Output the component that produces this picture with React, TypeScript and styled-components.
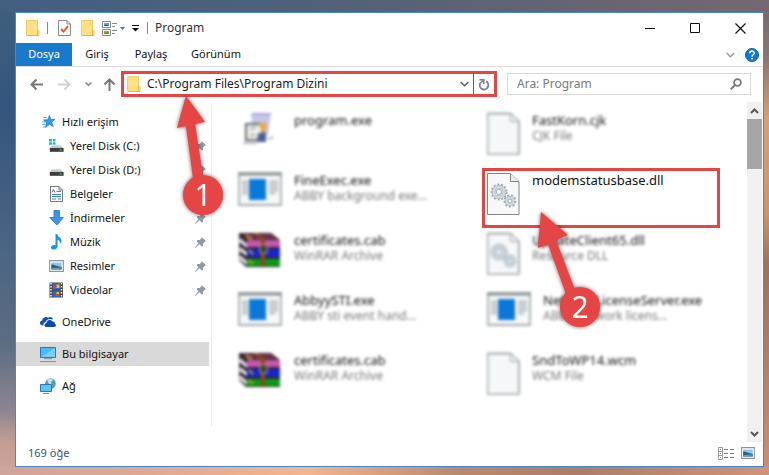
import React from "react";
import styled, { createGlobalStyle, css } from "styled-components";

const RED = "#e64545";
const BLUE = "#1979ca";

const GlobalStyle = createGlobalStyle`
  * { box-sizing: border-box; }
  body {
    margin: 0;
    font-family: "Noto Sans", "Open Sans", sans-serif;
    font-size: 12px;
    line-height: 16px;
    color: #1c1c1c;
  }
  button, input { font: inherit; color: inherit; }
  ul { list-style: none; margin: 0; padding: 0; }
`;

const Desktop = styled.div`
  min-height: 100vh;
  padding: 12px 5px 8px 15px;
  display: flex;
  background:
    linear-gradient(90deg, #41607f, #4f6179 40%, #606374 65%, #74696f) top / 100% 12px no-repeat,
    linear-gradient(90deg, #cfa49a, #dcab97 20%, #efb792 40%, #b58a72 60%, #a87f6c 75%, #cd947b) bottom / 100% 8px no-repeat,
    linear-gradient(180deg, #6f6970, #8a7673 12%, #d2a277 25%, #c8966d 45%, #99735f 56%, #ad806b 75%, #c99079) right / 50% 100% no-repeat,
    linear-gradient(180deg, #41607f, #34557d 22%, #486484 50%, #5c6c82 72%, #8a8490 86%, #c39c94 93%, #cfa49a) left / 50% 100% no-repeat;
`;

const Window = styled.main`
  position: relative;
  flex: 1;
  min-width: 0;
  display: flex;
  flex-direction: column;
  background: #fff;
  border: 1px solid #4a86cc;
`;

const TitleBar = styled.header`
  height: 30px;
  display: flex;
  align-items: center;
  padding: 0 17px 0 10px;
`;

const Title = styled.h1`
  flex: 1;
  margin: 0;
  font-size: 12px;
  font-weight: 400;
  color: #333;
`;

const QuickTools = styled.div`
  display: flex;
  align-items: center;
  gap: 7px;
  margin-right: 7px;
`;

const IconButton = styled.button<{ $w?: number }>`
  display: inline-flex;
  align-items: center;
  justify-content: center;
  width: ${(p) => (p.$w ? `${p.$w}px` : "auto")};
  padding: 0;
  border: 0;
  background: none;
  svg { display: block; flex: none; }
`;

const Separator = styled.span`
  width: 1px;
  height: 12px;
  background: #8a8a8a;
`;

const WindowControls = styled.div`
  display: flex;
  gap: 34px;
`;

const Ribbon = styled.nav`
  height: 24px;
  display: flex;
  border-bottom: 1px solid #dadada;
`;

const Tab = styled.button<{ $active?: boolean; $w: number }>`
  width: ${(p) => p.$w}px;
  height: 23px;
  padding: 0 0 1px;
  border: 0;
  font-size: 11px;
  text-align: center;
  background: ${(p) => (p.$active ? BLUE : "transparent")};
  color: ${(p) => (p.$active ? "#fff" : "#111")};
`;

const RibbonEnd = styled.div`
  margin-left: auto;
  padding-right: 4px;
  display: flex;
  align-items: center;
  gap: 10px;
`;

const NavBar = styled.div`
  display: flex;
  align-items: center;
  height: 34px;
  padding: 0 12px 0 7px;
`;

const NavButtons = styled.div`
  display: flex;
  align-items: center;
`;

const AddressBar = styled.div`
  flex: 1;
  height: 26px;
  display: flex;
  align-items: center;
  border: 3px solid ${RED};
  padding-left: 3px;
`;

const AddressInput = styled.input`
  flex: 1;
  min-width: 0;
  margin-left: 6px;
  padding: 0;
  border: 0;
  outline: 0;
  background: none;
`;

const Refresh = styled(IconButton)`
  align-self: stretch;
  width: 21px;
  margin-left: 4px;
  border-left: 1px solid #2a6fae;
`;

const SearchBox = styled.label`
  width: 244px;
  height: 22px;
  margin-left: 10px;
  padding: 0 8px 0 9px;
  display: flex;
  align-items: center;
  border: 1px solid #d9d9d9;
`;

const SearchInput = styled.input`
  flex: 1;
  min-width: 0;
  padding: 0;
  border: 0;
  outline: 0;
  background: none;
  &::placeholder { color: #7a7a7a; opacity: 1; }
`;

const Content = styled.div`
  flex: 1;
  display: flex;
`;

const Sidebar = styled.nav`
  width: 196px;
  margin: 2px 0 16px;
  padding: 7px 2px 0 0;
  border-right: 1px solid #ececec;
  font-size: 11px;
  color: #111;
`;

const SideLink = styled.a<{ $child?: boolean; $gap?: boolean; $selected?: boolean }>`
  display: flex;
  align-items: center;
  height: 24px;
  margin-top: ${(p) => (p.$gap ? 8 : 0)}px;
  padding: 0 3px 0 ${(p) => (p.$child ? 33 : 24)}px;
  color: inherit;
  text-decoration: none;
  background: ${(p) => (p.$selected ? "#d9d9d9" : "transparent")};
  svg { flex: none; }
`;

const SideText = styled.span`
  flex: 1;
  margin-left: 6px;
`;

const FileGrid = styled.ul`
  flex: 1;
  min-width: 0;
  display: grid;
  grid-template-columns: repeat(2, minmax(0, 1fr));
  grid-auto-rows: 60px;
  column-gap: 6px;
  padding: 7px 27px 0 26px;
`;

const FileItem = styled.li<{ $focus?: boolean; $right?: boolean }>`
  position: relative;
  display: flex;
  gap: 12px;
  padding: 4px 0 0 ${(p) => (p.$right ? 5 : 0)}px;
  ${(p) =>
    p.$focus
      ? css`
          padding: 1px 0 0 2px;
          border: 3px solid ${RED};
        `
      : css`
          > svg, > div { filter: blur(1.4px); }
        `}
  > svg { flex: none; }
`;

const FileText = styled.div`
  min-width: 0;
  color: #111;
  white-space: nowrap;
`;

const FileName = styled.div`
  font-size: 13px;
`;

const FileKind = styled.div`
  color: #777;
`;

const Scrollbar = styled.div`
  width: 15px;
  margin: 1px 1px 0 0;
  display: flex;
  flex-direction: column;
  align-items: center;
  background: #f0f0f0;
`;

const Thumb = styled.div`
  width: 15px;
  height: 50px;
  margin-bottom: auto;
  background: #a6a6a6;
`;

const StatusBar = styled.footer`
  height: 24px;
  display: flex;
  align-items: center;
  gap: 7px;
  padding: 0 8px 2px 12px;
  font-size: 11px;
  color: #3b5273;
  span { flex: 1; }
`;

const Marker = styled.svg<{ $x: number; $y: number }>`
  position: absolute;
  left: ${(p) => p.$x}px;
  top: ${(p) => p.$y}px;
  z-index: 2;
  overflow: visible;
  pointer-events: none;
  filter: drop-shadow(0 0 2px rgba(60, 20, 20, 0.7));
`;

const Folder = () => (
  <svg width="14" height="16" viewBox="0 0 14 16">
    <path d="M.5.5h11v10H13v5H.5z" fill="#ffe084" stroke="#f0ca66" strokeWidth="1" />
    <path d="M11.500 10.500v4.500M1 15.500h12" stroke="#e5b441" fill="none" />
  </svg>
);

const Check = () => (
  <svg width="13" height="16" viewBox="0 0 13 16">
    <path d="M.5.5h8.5l3.5 3.5v11.5H.5z" fill="#fafafa" stroke="#8b8b8b" />
    <path d="M9 .5V4h3.5" fill="none" stroke="#8b8b8b" />
    <path d="M3 9l2.5 2.5L10 6" fill="none" stroke="#e8561d" strokeWidth="1.9" />
  </svg>
);

const Layouts = () => (
  <svg width="23" height="15" viewBox="0 0 23 15">
    <path d="M.5.5h8v6h-8zM.5 8.500h8v6h-8z" fill="#fff" stroke="#888" />
    <path d="M2 2h5v3H2z" fill="#5baee8" />
    <path d="M2 4.500l2-1 3 1V5H2z" fill="#245e8c" />
    <path d="M2 10h5v3H2z" fill="#7cbcf0" />
    <path d="M2 12l3-1.500 2 .5v2H2z" fill="#5aa338" />
    <path d="M2 10h2v2H2z" fill="#df754a" />
    <path d="M10 2.500h5M10 5.500h3M10 9.500h5M10 12.500h3" stroke="#888" />
    <path d="M18 6h5l-2.500 3z" fill="#3973bd" />
  </svg>
);

const Menu = () => (
  <svg width="8" height="7" viewBox="0 0 8 7">
    <path d="M0 .5h7" stroke="#111" />
    <path d="M0 3h7L3.500 6.500z" fill="#111" />
  </svg>
);

const Arrow = ({ dir, color }: { dir: "left" | "right" | "up"; color: string }) => (
  <svg width="13" height="13" viewBox="0 0 13 13" fill="none" stroke={color} strokeWidth="2">
    {dir === "left" && <path d="M13 6.500H1.500M6.500 1.500l-5 5 5 5" />}
    {dir === "right" && <path d="M0 6.500h11.500M6.500 1.500l5 5-5 5" />}
    {dir === "up" && <path d="M6.500 13V1.500M1.500 6.500l5-5 5 5" />}
  </svg>
);

const Chevron = ({ color, w = 9, bold }: { color: string; w?: number; bold?: boolean }) => (
  <svg width={w} height="6" viewBox="0 0 9 6" fill="none" stroke={color} strokeWidth={bold ? 2 : 1.3}>
    <path d="M.7 1l3.800 3.800L8.300 1" />
  </svg>
);

const RefreshIcon = () => (
  <svg width="12" height="13" viewBox="0 0 12 13" fill="none" stroke="#808080">
    <path d="M8.200 3.400A4.300 4.300 0 1 1 2.300 5" strokeWidth="1.900" />
    <path d="M1.500 1.800h4.300v4.200" strokeWidth="1.500" />
    <path d="M5.500 2L2.400 5.200" strokeWidth="1.500" />
  </svg>
);

const Magnifier = () => (
  <svg width="12" height="12" viewBox="0 0 12 12" fill="none" stroke="#777">
    <circle cx="7.500" cy="4.500" r="3.400" strokeWidth="1.800" />
    <path d="M5 7L.8 11.200" strokeWidth="2" />
  </svg>
);

const Help = () => (
  <svg width="14" height="14" viewBox="0 0 14 14">
    <circle cx="7" cy="7" r="6.500" fill="#0f78d4" stroke="#145fa5" />
    <path d="M4.800 5.300c0-3 4.500-2.800 4.500-.3C9.300 6.600 7 6.700 7 8.700M7 9.900v1.700" fill="none" stroke="#fff" strokeWidth="1.500" />
  </svg>
);

const Star = () => (
  <svg width="16" height="16" viewBox="0 0 16 16">
    <path d="M9.500 1.500l1.200 4 4.300-.2-3.400 2.800 1.800 4.500-4-2.300-4 3.300 1.300-4.800L3.500 6l4.200-.3z" fill="#28a0e8" stroke="#1976bd" strokeWidth=".7" />
    <path d="M3 3.500h4M2 8h3.500M2 10.500h3M3 13h2" stroke="#57b5ec" />
  </svg>
);

const Disk = ({ win }: { win?: boolean }) => (
  <svg width="15" height="16" viewBox="0 0 15 16">
    {win && <path d="M0 1h3v2.500H0zM3.800 1h2.700v2.500H3.800zM0 4.300h3v2.500H0zM3.800 4.300h2.700v2.500H3.800z" fill="#20b3ef" />}
    <path d="M3 7.500h9l2.500 3H.8z" fill="#c5c5c5" />
    <path d="M.8 10h13.800v3.800H.8z" fill="#3d3d40" />
    <path d="M10.500 11.300h2v1.200h-2z" fill="#35e04c" />
  </svg>
);

const Docs = () => (
  <svg width="15" height="16" viewBox="0 0 15 16">
    <path d="M1.500.5h8.500L13.500 4v11.500h-12z" fill="#fff" stroke="#777" />
    <path d="M10 .5V4h3.500" fill="none" stroke="#777" />
    <path d="M7.500 5.500H12M3 8.500h9M3 10.500h9M3 13h4M9 13h3" stroke="#3c83bd" />
    <path d="M3 6.500l1.500-3L6 6.500" fill="none" stroke="#2e6ea5" />
  </svg>
);

const Down = () => (
  <svg width="15" height="16" viewBox="0 0 15 16">
    <path d="M5 .5h5.500v7h4L7.800 15 .8 7.500H5z" fill="#3f92e6" stroke="#2a73c4" strokeWidth=".8" />
  </svg>
);

const Music = () => (
  <svg width="15" height="16" viewBox="0 0 15 16">
    <path d="M6.500 0h1.800c.4 3 4.700 3.700 4.200 7.500-.2 1.300-.6 2-1.200 2.800.5-2.800-1-4-2.700-4.500V12c0 2.300-1.600 3.500-3.500 3.500S1.800 14.600 2 13.200c.3-1.700 2.500-2.800 4.500-2z" fill="#1c96e4" />
  </svg>
);

const Picture = ({ w = 16 }: { w?: number }) => (
  <svg width={w} height="12" viewBox="0 0 16 12" preserveAspectRatio="none">
    <path d="M.7.700h14.600v10.600H.7z" fill="#fff" stroke="#8f9498" strokeWidth="1.200" />
    <path d="M2.500 2.500h11v7h-11z" fill="#8cc5f0" />
    <path d="M2.500 4.500c3 0 5 1.500 11 2.500v2.500h-11z" fill="#2d6175" />
    <path d="M3 8.700l10-.7" stroke="#79a9bd" />
  </svg>
);

const Video = () => (
  <svg width="15" height="16" viewBox="0 0 15 16">
    <path d="M.5.500h13.500v15H.5z" fill="#444" />
    <path d="M3.500 1h7.500v6.500H3.500zM3.500 8.500h7.500V15H3.500z" fill="#3366bd" />
    <path d="M7.500 2.500h3V6h-3zM7.500 10h2.500v2H7.500z" fill="#f0bd2e" />
    <path d="M4 4h3v2.500H4zM7 12h3v2H7z" fill="#cc4a3e" />
    <path d="M2 1v14M12.500 1v14" stroke="#fff" strokeWidth="1.500" strokeDasharray="1.500 1.500" />
  </svg>
);

const Cloud = () => (
  <svg width="16" height="12" viewBox="0 0 16 12">
    <path d="M3.500 9.500C1.500 10 0 8.500 0 7c0-1.400 1-2.300 2.200-2.500C2.500 1.500 6 0 8.200 1.800 10 0 13 1.500 13 3.500 8.500 2 6 4 5.800 6 4 6.300 3 7.800 3.500 9.500z" fill="#1551a8" />
    <path d="M6.500 11C4 11 3.800 7.500 6.500 7c.2-3 4-4 5.800-1.500 2-.3 2.700 1 2.500 2.200 1.700.6 1.500 3.300-.5 3.300z" fill="#094ab2" />
  </svg>
);

const Monitor = () => (
  <svg width="16" height="16" viewBox="0 0 16 16">
    <path d="M.5 1.500h15v10H.5z" fill="#4cb9f6" stroke="#2c77a5" />
    <path d="M1 11L15 2v9z" fill="#7ccffb" />
    <path d="M4 12.700h8M0 15.500h16" stroke="#7894a8" />
  </svg>
);

const Network = () => (
  <svg width="16" height="16" viewBox="0 0 16 16">
    <circle cx="10.500" cy="5.500" r="5.300" fill="#589ab7" />
    <path d="M7 2c2-2 5-1.500 6 0l-2 2 1 3-3-1z" fill="#c4e2ec" />
    <path d="M.5 6.500h11v7H.5z" fill="#58c5f7" stroke="#2c77a5" />
    <path d="M3 15.500h6" stroke="#6d8ea2" />
  </svg>
);

const Pin = () => (
  <svg width="11" height="11" viewBox="0 0 11 11">
    <path d="M6.500 0L11 4.200l-1.300.6-1.700 2 .1 2.200L6.600 9.500 4.500 7.300.5 10.700 0 10.300 3.500 6.200 1.600 4.300 2.300 3l2.200.1 1.800-1.700z" fill="#8c9ba6" />
  </svg>
);

const Gear = ({ cx, cy, r }: { cx: number; cy: number; r: number }) => (
  <g fill="none">
    <circle cx={cx} cy={cy} r={r} stroke="#a3afb8" strokeWidth="2.400" strokeDasharray="2 1.600" />
    <circle cx={cx} cy={cy} r={r - 2} stroke="#a3afb8" strokeWidth="3.600" />
    <circle cx={cx} cy={cy} r={r - 2} stroke="#d0d9df" strokeWidth="2.600" />
    <circle cx={cx} cy={cy} r={r / 2.800} fill="#fff" stroke="#a3afb8" />
  </g>
);

const Page = ({ gears, sharp }: { gears?: boolean; sharp?: boolean }) => (
  <svg width="33" height="43" viewBox="0 0 33 43">
    <path d="M.5 1.500h23l8.500 8v33H.5z" fill="#f5f7f8" stroke={sharp ? "#858585" : "#a4a8aa"} strokeWidth={sharp ? 1 : 1.800} />
    <path d="M23.500 1.500v8h8.500" fill="#e7ebee" stroke={sharp ? "#858585" : "#a4a8aa"} />
    {gears && <Gear cx={12} cy={20} r={7.300} />}
    {gears && <Gear cx={23} cy={29} r={5.300} />}
  </svg>
);

const AppWindow = () => (
  <svg width="44" height="34" viewBox="0 0 44 34">
    <path d="M1 1h42v32H1z" fill="#f7f8f8" stroke="#a3abad" strokeWidth="1.800" />
    <path d="M0 2h44" stroke="#8c9496" strokeWidth="3" />
    <path d="M4 9.500h6M4 12.500h6M4 15.500h6M4 18.500h6M4 21.500h6M31 9.500h9M31 12.500h9M31 15.500h9M31 18.500h9M31 21.500h6" stroke="#b5b8ba" strokeWidth="2" />
    <path d="M11 7h17v21H11z" fill="#0a78d7" />
  </svg>
);

const Setup = () => (
  <svg width="44" height="34" viewBox="0 0 44 34">
    <path d="M13 1h20l-3 22H15z" fill="#c6c7e6" />
    <path d="M14 2h19" stroke="#a3a3e0" strokeWidth="2" />
    <path d="M8 12h17v16H8z" fill="#eef1ee" stroke="#666" strokeWidth="2" />
    <path d="M21 12l7-2 1 7-6 3z" fill="#e8ae48" />
    <path d="M12 17l6-2M12 23h5" stroke="#aaa" strokeWidth="2" />
    <path d="M20 21h8v9h-9z" fill="#50608c" />
    <path d="M5 31h14M30 27l5-2" stroke="#b5b5cc" strokeWidth="2" />
  </svg>
);

const Archive = () => (
  <svg width="44" height="36" viewBox="0 0 44 36">
    <path d="M1 1h32l9 7v27H8L1 28z" fill="#35252f" />
    <path d="M2 6l7 6v4L1 10zM2 15l7 5v4L1 19zM2 23l7 6v4L1 27z" fill="#e8e8f2" />
    <path d="M4 2h28l7 5H10z" fill="#70304a" />
    <path d="M9 8h33v7H9z" fill="#c657ae" />
    <path d="M9 17h33v8H9z" fill="#1526cf" />
    <path d="M9 27h33v7H9z" fill="#099b15" />
    <path d="M8 4l6 3M11 18l4 4M11 28l4 4" stroke="#cba332" strokeWidth="2" />
    <path d="M20 1l7 7v26h-4V8l-7-7z" fill="#8d4b18" />
    <path d="M22 13h7v8h-7z" fill="#3e3a2e" stroke="#b1a98e" />
  </svg>
);

const Details = () => (
  <svg width="16" height="13" viewBox="0 0 16 13">
    <path d="M.5.500h4v12h-4zM.5 4.500h4M.5 8.500h4" fill="#fff" stroke="#999" />
    <path d="M2 2h1v1H2zM2 6h1v1H2z" fill="#3b80c4" />
    <path d="M2 10h1v1H2z" fill="#d44" />
    <path d="M6 2.500h10M6 6.500h10M6 10.500h10" stroke="#777" strokeDasharray="4 2" />
  </svg>
);

const NumberText = styled.text`
  font-size: 30px;
  fill: #fff;
  text-anchor: middle;
`;

const sideItems = [
  { label: "Hızlı erişim", icon: <Star /> },
  { label: "Yerel Disk (C:)", icon: <Disk win />, child: true },
  { label: "Yerel Disk (D:)", icon: <Disk />, child: true },
  { label: "Belgeler", icon: <Docs />, child: true },
  { label: "İndirmeler", icon: <Down />, child: true },
  { label: "Müzik", icon: <Music />, child: true },
  { label: "Resimler", icon: <Picture w={15} />, child: true },
  { label: "Videolar", icon: <Video />, child: true },
  { label: "OneDrive", icon: <Cloud />, gap: true },
  { label: "Bu bilgisayar", icon: <Monitor />, gap: true, selected: true },
  { label: "Ağ", icon: <Network />, gap: true },
];

const files = [
  { name: "program.exe", icon: <Setup /> },
  { name: "FastKorn.cjk", kind: "CJK File", icon: <Page /> },
  { name: "FineExec.exe", kind: "ABBY background exe...", icon: <AppWindow /> },
  { name: "modemstatusbase.dll", icon: <Page gears sharp />, focus: true },
  { name: "certificates.cab", kind: "WinRAR Archive", icon: <Archive /> },
  { name: "UpdateClient65.dll", kind: "Resource DLL", icon: <Page gears /> },
  { name: "AbbyySTI.exe", kind: "ABBY sti event hand...", icon: <AppWindow /> },
  { name: "NetworkLicenseServer.exe", kind: "ABBY network licens...", icon: <AppWindow /> },
  { name: "certificates.cab", kind: "WinRAR Archive", icon: <Archive /> },
  { name: "SndToWP14.wcm", kind: "WCM File", icon: <Page /> },
];

export default function App() {
  return (
    <>
      <GlobalStyle />
      <Desktop>
        <Window>
          <TitleBar>
            <QuickTools>
              <Folder />
              <Separator />
              <IconButton aria-label="Özellikler" $w={19}><Check /></IconButton>
              <IconButton aria-label="Yeni klasör"><Folder /></IconButton>
              <IconButton aria-label="Düzen"><Layouts /></IconButton>
              <IconButton aria-label="Özelleştir"><Menu /></IconButton>
              <Separator />
            </QuickTools>
            <Title>Program</Title>
            <WindowControls>
              <IconButton aria-label="Simge durumuna küçült">
                <svg width="11" height="11" viewBox="0 0 11 11"><path d="M0 5.500h10" stroke="#111" /></svg>
              </IconButton>
              <IconButton aria-label="Ekranı kapla">
                <svg width="11" height="11" viewBox="0 0 11 11"><path d="M.5.500h9v9h-9z" fill="none" stroke="#111" /></svg>
              </IconButton>
              <IconButton aria-label="Kapat">
                <svg width="11" height="11" viewBox="0 0 11 11"><path d="M.5.500l10 10M10.500.500l-10 10" stroke="#111" strokeWidth="1.200" /></svg>
              </IconButton>
            </WindowControls>
          </TitleBar>

          <Ribbon>
            <Tab $active $w={56}>Dosya</Tab>
            <Tab $w={50}>Giriş</Tab>
            <Tab $w={58}>Paylaş</Tab>
            <Tab $w={72}>Görünüm</Tab>
            <RibbonEnd>
              <IconButton aria-label="Şeridi genişlet"><Chevron color="#999" /></IconButton>
              <IconButton aria-label="Yardım"><Help /></IconButton>
            </RibbonEnd>
          </Ribbon>

          <NavBar>
            <NavButtons>
              <IconButton aria-label="Geri" $w={26}><Arrow dir="left" color="#777" /></IconButton>
              <IconButton aria-label="İleri" $w={30}><Arrow dir="right" color="#d2d2d2" /></IconButton>
              <IconButton aria-label="Son konumlar" $w={19}><Chevron color="#888" w={7} bold /></IconButton>
              <IconButton aria-label="Yukarı" $w={23}><Arrow dir="up" color="#777" /></IconButton>
            </NavButtons>
            <AddressBar>
              <Folder />
              <AddressInput aria-label="Adres" defaultValue="C:\Program Files\Program Dizini" />
              <IconButton aria-label="Önceki konumlar"><Chevron color="#555" /></IconButton>
              <Refresh aria-label="Yenile"><RefreshIcon /></Refresh>
            </AddressBar>
            <SearchBox>
              <SearchInput aria-label="Ara" placeholder="Ara: Program" />
              <Magnifier />
            </SearchBox>
          </NavBar>

          <Content>
            <Sidebar>
              {sideItems.map((item) => (
                <SideLink key={item.label} href="#" $child={item.child} $gap={item.gap} $selected={item.selected}>
                  {item.icon}
                  <SideText>{item.label}</SideText>
                  {item.child && <Pin />}
                </SideLink>
              ))}
            </Sidebar>
            <FileGrid>
              {files.map((file, i) => (
                <FileItem key={i} $focus={file.focus} $right={i % 2 === 1}>
                  {file.icon}
                  <FileText>
                    <FileName>{file.name}</FileName>
                    {file.kind && <FileKind>{file.kind}</FileKind>}
                  </FileText>
                  {file.focus && (
                    <Marker $x={55} $y={40} width="62" height="118" viewBox="0 0 62 118" aria-label="2">
                      <path d="M1 1l27 23-12 5 19 50-9 4-18-50-10 4z" fill={RED} />
                      <circle cx="40" cy="96" r="20" fill={RED} />
                      <NumberText x="40" y="107">2</NumberText>
                    </Marker>
                  )}
                </FileItem>
              ))}
            </FileGrid>
            <Scrollbar>
              <IconButton aria-label="Yukarı kaydır">
                <svg width="9" height="17" viewBox="0 0 9 17"><path d="M1 11l3.500-3.500L8 11" fill="none" stroke="#555" strokeWidth="2" /></svg>
              </IconButton>
              <Thumb />
              <IconButton aria-label="Aşağı kaydır">
                <svg width="9" height="17" viewBox="0 0 9 17"><path d="M1 7l3.500 3.500L8 7" fill="none" stroke="#555" strokeWidth="2" /></svg>
              </IconButton>
            </Scrollbar>
          </Content>

          <StatusBar>
            <span>169 öğe</span>
            <IconButton aria-label="Ayrıntılar"><Details /></IconButton>
            <IconButton aria-label="Büyük simgeler"><Picture w={14} /></IconButton>
          </StatusBar>

          <Marker $x={160} $y={83} width="50" height="120" viewBox="0 0 50 120" aria-label="1">
            <path d="M10 0l19 26-10 2 8 52-10 2-7-52-9 2z" fill={RED} />
            <circle cx="27" cy="99" r="20" fill={RED} />
            <NumberText x="27" y="110">1</NumberText>
          </Marker>
        </Window>
      </Desktop>
    </>
  );
}
